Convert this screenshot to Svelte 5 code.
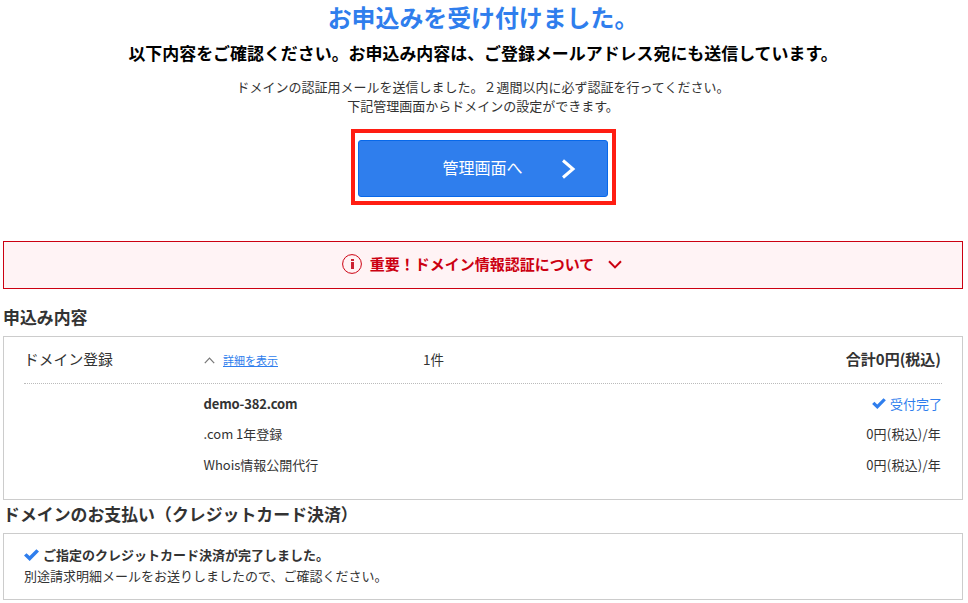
<script>
  let alertOpen = false;

  const details = [
    { name: '.com 1年登録', price: '0円(税込)/年' },
    { name: 'Whois情報公開代行', price: '0円(税込)/年' }
  ];

  function toggleAlert() {
    alertOpen = !alertOpen;
  }
</script>

<main class="page">
  <section class="intro">
    <h1>お申込みを受け付けました。</h1>
    <p class="lead">以下内容をご確認ください。お申込み内容は、ご登録メールアドレス宛にも送信しています。</p>
    <p class="note">
      ドメインの認証用メールを送信しました。２週間以内に必ず認証を行ってください。<br />
      下記管理画面からドメインの設定ができます。
    </p>
    <div class="highlight">
      <button class="go">
        <span class="go-label">管理画面へ</span>
        <svg class="go-arrow" width="15" height="20" viewBox="0 0 15 20" fill="none">
          <path d="M2 1.5L12 10L2 18.5" stroke="#fff" stroke-width="3" />
        </svg>
      </button>
    </div>
  </section>

  <button class="alert" on:click={toggleAlert} aria-expanded={alertOpen}>
    <svg width="20" height="20" viewBox="0 0 20 20" fill="none">
      <circle cx="10" cy="10" r="9.4" stroke="#cc0011" stroke-width="1" />
      <path d="M9 5h3v2H9zM9 8h3v7H9z" fill="#cc2233" />
    </svg>
    <span class="alert-label">重要！ドメイン情報認証について</span>
    <svg width="14" height="9" viewBox="0 0 14 9" fill="none">
      <path d="M1 1.2L7 7.4L13 1.2" stroke="#cc0011" stroke-width="2" />
    </svg>
  </button>

  <h2>申込み内容</h2>
  <section class="card order">
    <div class="summary">
      <span class="kind">ドメイン登録</span>
      <span class="toggle">
        <svg width="11" height="7" viewBox="0 0 11 7" fill="none">
          <path d="M0.8 6.2L5.5 1.2L10.2 6.2" stroke="#777" stroke-width="1.2" />
        </svg>
        <a href="#detail">詳細を表示</a>
      </span>
      <span class="count">1件</span>
      <span class="total">合計0円(税込)</span>
    </div>
    <div class="rows" id="detail">
      <div class="row">
        <b class="domain">demo-382.com</b>
        <span class="done">
          <svg width="14" height="11" viewBox="0 0 15 12">
            <path d="M0 6.6L2.5 4.2L5.6 7L12.4 0.2L15 2.4L5.7 12z" fill="#2f7eed" />
          </svg>
          受付完了
        </span>
      </div>
      {#each details as item}
        <div class="row">
          <span>{item.name}</span>
          <span class="price">{item.price}</span>
        </div>
      {/each}
    </div>
  </section>

  <h2 class="pay-title">ドメインのお支払い（クレジットカード決済）</h2>
  <section class="card payment">
    <div class="paid">
      <svg width="15" height="12" viewBox="0 0 15 12">
        <path d="M0 6.6L2.5 4.2L5.6 7L12.4 0.2L15 2.4L5.7 12z" fill="#2f7eed" />
      </svg>
      <b>ご指定のクレジットカード決済が完了しました。</b>
    </div>
    <div>別途請求明細メールをお送りしましたので、ご確認ください。</div>
  </section>
</main>

<style>
  :global(body) {
    background: #fff;
  }

  .page {
    width: 960px;
    margin-left: 3px;
    font-family: "Noto Sans CJK JP", sans-serif;
    font-size: 13px;
    color: #333;
    white-space: nowrap;
  }

  h1,
  h2,
  p {
    margin: 0;
  }

  button {
    box-sizing: border-box;
    padding: 0;
    font-family: inherit;
    cursor: pointer;
  }

  svg {
    display: block;
    flex: none;
  }

  .intro {
    display: flex;
    flex-direction: column;
    align-items: center;
    text-align: center;
  }

  h1 {
    font-size: 23.9px;
    line-height: 33px;
    color: #2f7eed;
  }

  .lead {
    padding-top: 1px;
    font-size: 16.95px;
    line-height: 38px;
    font-weight: bold;
    color: #000;
  }

  .note {
    margin-top: 5px;
    line-height: 19px;
  }

  .highlight {
    box-sizing: border-box;
    width: 265px;
    height: 76px;
    margin-top: 14px;
    padding: 7px 3px 6px;
    border: 4px solid #ff1d12;
  }

  .go {
    display: grid;
    grid-template-columns: 1fr 80px 1fr;
    align-items: center;
    width: 250px;
    height: 57px;
    border: 1px solid #0768ea;
    border-radius: 3px;
    background: #2f7eed;
    color: #fff;
    font-size: 16px;
  }

  .go-label {
    grid-column: 2;
    padding-bottom: 4px;
  }

  .go-arrow {
    margin-left: 38px;
  }

  .alert {
    display: flex;
    align-items: center;
    justify-content: center;
    width: 960px;
    height: 48px;
    margin-top: 36px;
    padding: 0 2px 2px 0;
    border: 1px solid #cc0011;
    background: #fff3f5;
    color: #cc0011;
    font-size: 15px;
    font-weight: bold;
  }

  .alert-label {
    margin: 0 14px 0 8px;
    padding-bottom: 2px;
  }

  h2 {
    margin-top: 16px;
    font-size: 16.9px;
    line-height: 24px;
  }

  .card {
    box-sizing: border-box;
    border: 1px solid #ccc;
    padding: 0 20px;
  }

  .order {
    height: 164px;
    margin-top: 7px;
  }

  .summary {
    display: grid;
    grid-template-columns: 180px 219px 1fr auto;
    align-items: center;
    height: 46px;
    border-bottom: 1px dotted #bbb;
    font-size: 15px;
  }

  .kind {
    padding-bottom: 3px;
    font-size: 14.8px;
  }

  .toggle {
    display: flex;
    align-items: center;
    gap: 8px;
    font-size: 11px;
  }

  .toggle a {
    color: #2f7eed;
  }

  .count {
    padding-bottom: 2px;
    font-size: 13.5px;
  }

  .total {
    padding: 0 1px 4px 0;
    font-weight: bold;
  }

  .rows {
    padding: 4px 0 0 179.5px;
  }

  .row {
    display: flex;
    align-items: center;
    justify-content: space-between;
    height: 30.5px;
  }

  .domain {
    letter-spacing: -0.15px;
  }

  .price {
    padding-right: 1px;
    letter-spacing: 0.22px;
  }

  .done {
    display: flex;
    align-items: center;
    gap: 4px;
    color: #2f7eed;
  }

  .pay-title {
    margin-top: 2px;
  }

  .payment {
    height: 67px;
    margin-top: 7px;
    padding-top: 10px;
    line-height: 21px;
  }

  .paid {
    display: flex;
    align-items: center;
    gap: 4px;
  }
</style>
